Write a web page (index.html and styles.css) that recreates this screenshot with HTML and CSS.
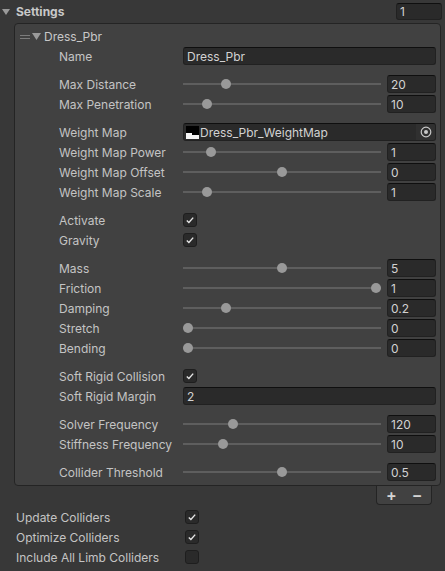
FILE: index.html
```html
<!DOCTYPE html>
<html>
<head>
<meta charset="utf-8">
<link rel="stylesheet" href="styles.css">
</head>
<body>
<div class="inspector">
  <div class="header">
    <svg class="arrow" width="8" height="8" viewBox="0 0 8 8"><polygon points="0,1 8,1 4,7" fill="#9a9a9a"/></svg>
    <span class="header-title">Settings</span>
    <div class="field size-field">1</div>
  </div>

  <div class="list">
    <div class="panel">
      <div class="group">
        <div class="element-head">
          <svg class="handle" width="10" height="6" viewBox="0 0 10 6"><rect x="0" y="1" width="10" height="1" fill="#7c7c7c"/><rect x="0" y="4" width="10" height="1" fill="#7c7c7c"/></svg>
          <svg class="arrow" width="9" height="8" viewBox="0 0 9 8"><polygon points="0,1 9,1 4.5,8" fill="#9a9a9a"/></svg>
          <span class="element-title">Dress_Pbr</span>
        </div>
        <div class="row"><span class="label">Name</span><div class="field">Dress_Pbr</div></div>
      </div>

      <div class="group">
        <div class="row"><span class="label">Max Distance</span><div class="slider"><div class="track"><span class="thumb" style="--v:0.202"></span></div><div class="field value">20</div></div></div>
        <div class="row"><span class="label">Max Penetration</span><div class="slider"><div class="track"><span class="thumb" style="--v:0.1"></span></div><div class="field value">10</div></div></div>
      </div>

      <div class="group">
        <div class="row"><span class="label">Weight Map</span>
          <div class="field objfield">
            <svg class="tex" width="13" height="13" viewBox="0 0 13 13"><rect width="13" height="13" fill="#000"/><rect x="0" y="7" width="6" height="2" fill="#f4f4f4"/><rect x="0" y="9" width="13" height="4" fill="#f4f4f4"/></svg>
            <span class="objname">Dress_Pbr_WeightMap</span>
            <span class="picker"><svg width="12" height="12" viewBox="0 0 12 12"><circle cx="6" cy="6" r="4.8" fill="none" stroke="#c8c8c8" stroke-width="1.2"/><circle cx="6" cy="6" r="2" fill="#c8c8c8"/></svg></span>
          </div>
        </div>
        <div class="row"><span class="label">Weight Map Power</span><div class="slider"><div class="track"><span class="thumb" style="--v:0.122"></span></div><div class="field value">1</div></div></div>
        <div class="row"><span class="label">Weight Map Offset</span><div class="slider"><div class="track"><span class="thumb" style="--v:0.5"></span></div><div class="field value">0</div></div></div>
        <div class="row"><span class="label">Weight Map Scale</span><div class="slider"><div class="track"><span class="thumb" style="--v:0.1"></span></div><div class="field value">1</div></div></div>
      </div>

      <div class="group">
        <div class="row"><span class="label">Activate</span><span class="check on"><svg width="14" height="14" viewBox="0 0 14 14"><polyline points="3.8,7.4 5.9,9.4 10.2,4.6" fill="none" stroke="#e6e6e6" stroke-width="1.4"/></svg></span></div>
        <div class="row"><span class="label">Gravity</span><span class="check on"><svg width="14" height="14" viewBox="0 0 14 14"><polyline points="3.8,7.4 5.9,9.4 10.2,4.6" fill="none" stroke="#e6e6e6" stroke-width="1.4"/></svg></span></div>
      </div>

      <div class="group">
        <div class="row"><span class="label">Mass</span><div class="slider"><div class="track"><span class="thumb" style="--v:0.5"></span></div><div class="field value">5</div></div></div>
        <div class="row"><span class="label">Friction</span><div class="slider"><div class="track"><span class="thumb" style="--v:1"></span></div><div class="field value">1</div></div></div>
        <div class="row"><span class="label">Damping</span><div class="slider"><div class="track"><span class="thumb" style="--v:0.2"></span></div><div class="field value">0.2</div></div></div>
        <div class="row"><span class="label">Stretch</span><div class="slider"><div class="track"><span class="thumb" style="--v:0"></span></div><div class="field value">0</div></div></div>
        <div class="row"><span class="label">Bending</span><div class="slider"><div class="track"><span class="thumb" style="--v:0"></span></div><div class="field value">0</div></div></div>
      </div>

      <div class="group">
        <div class="row"><span class="label">Soft Rigid Collision</span><span class="check on"><svg width="14" height="14" viewBox="0 0 14 14"><polyline points="3.8,7.4 5.9,9.4 10.2,4.6" fill="none" stroke="#e6e6e6" stroke-width="1.4"/></svg></span></div>
        <div class="row"><span class="label">Soft Rigid Margin</span><div class="field">2</div></div>
      </div>

      <div class="group">
        <div class="row"><span class="label">Solver Frequency</span><div class="slider"><div class="track"><span class="thumb" style="--v:0.24"></span></div><div class="field value">120</div></div></div>
        <div class="row"><span class="label">Stiffness Frequency</span><div class="slider"><div class="track"><span class="thumb" style="--v:0.186"></span></div><div class="field value">10</div></div></div>
      </div>

      <div class="group">
        <div class="row"><span class="label">Collider Threshold</span><div class="slider"><div class="track"><span class="thumb" style="--v:0.5"></span></div><div class="field value">0.5</div></div></div>
      </div>
    </div>
    <div class="footer"><span class="btn plus">+</span><span class="btn minus">&minus;</span></div>
  </div>

  <div class="bottom">
    <div class="brow"><span class="label">Update Colliders</span><span class="check on"><svg width="14" height="14" viewBox="0 0 14 14"><polyline points="3.8,7.4 5.9,9.4 10.2,4.6" fill="none" stroke="#e6e6e6" stroke-width="1.4"/></svg></span></div>
    <div class="brow"><span class="label">Optimize Colliders</span><span class="check on"><svg width="14" height="14" viewBox="0 0 14 14"><polyline points="3.8,7.4 5.9,9.4 10.2,4.6" fill="none" stroke="#e6e6e6" stroke-width="1.4"/></svg></span></div>
    <div class="brow"><span class="label">Include All Limb Colliders</span><span class="check"></span></div>
  </div>
</div>
</body>
</html>
```

FILE: styles.css
```css
html, body {
  margin: 0;
  padding: 0;
}
body {
  background: #383838;
  font-family: Inter, "Noto Sans", "Liberation Sans", sans-serif;
  font-size: 12px;
  color: #c4c4c4;
  width: 445px;
  height: 571px;
  overflow: hidden;
}
.inspector {
  display: flex;
  flex-direction: column;
}
.header {
  height: 23px;
  display: flex;
  align-items: center;
  padding-left: 2px;
}
.header .arrow {
  margin-top: 1px;
}
.header-title {
  font-weight: 700;
  margin-left: 6px;
  color: #c8c8c8;
}
.field {
  box-sizing: border-box;
  height: 18px;
  background: #2a2a2a;
  border: 1px solid #212121;
  border-top-color: #0f0f0f;
  border-radius: 3px;
  padding: 0 3px;
  display: flex;
  align-items: center;
  color: #d2d2d2;
  white-space: nowrap;
  overflow: hidden;
}
.size-field {
  margin-left: auto;
  margin-right: 3px;
  width: 46px;
  height: 17px;
  margin-top: -1px;
}
.list {
  margin-left: 14px;
  width: 427px;
  display: flex;
  flex-direction: column;
}
.panel {
  background: #414141;
  border: 1px solid #242424;
  border-radius: 4px;
  padding: 3px 4px 4px 0;
  display: flex;
  flex-direction: column;
  gap: 10px;
}
.group {
  display: flex;
  flex-direction: column;
  gap: 2px;
}
.element-head {
  height: 18px;
  display: flex;
  align-items: center;
  padding-left: 5px;
}
.handle {
  margin-right: 2px;
  margin-top: 1px;
}
.element-title {
  margin-left: 3px;
  color: #c8c8c8;
}
.row {
  height: 18px;
  display: grid;
  grid-template-columns: 124px 253px;
  align-items: center;
  padding-left: 44px;
}
.label {
  white-space: nowrap;
}
.slider {
  display: flex;
  align-items: center;
  gap: 6px;
}
.track {
  flex: 1;
  height: 2px;
  background: #5e5e5e;
  position: relative;
}
.thumb {
  position: absolute;
  top: -4px;
  width: 10px;
  height: 10px;
  border-radius: 50%;
  background: #999999;
  left: calc(var(--v) * (100% - 10px));
}
.value {
  width: 49px;
  flex: none;
}
.objfield {
  padding: 0 0 0 2px;
}
.tex {
  flex: none;
  margin-right: 1px;
}
.objname {
  flex: 1;
}
.picker {
  width: 19px;
  align-self: stretch;
  background: #303030;
  display: flex;
  align-items: center;
  justify-content: center;
}
.check {
  box-sizing: border-box;
  width: 14px;
  height: 14px;
  background: #2a2a2a;
  border: 1px solid #1e1e1e;
  border-radius: 3px;
  display: flex;
  align-items: center;
  justify-content: center;
}
.check svg {
  margin: -1px;
}
.footer {
  align-self: flex-end;
  margin-right: 9px;
  width: 56px;
  height: 19px;
  box-sizing: border-box;
  background: #414141;
  border: 1px solid #242424;
  border-top: none;
  border-radius: 0 0 4px 4px;
  display: flex;
  align-items: center;
  padding: 0 0 1px 9px;
  gap: 15px;
  color: #d4d4d4;
  font-size: 16px;
  font-weight: 600;
}
.bottom {
  margin-top: 3px;
  display: flex;
  flex-direction: column;
  gap: 2px;
}
.brow {
  height: 18px;
  display: grid;
  grid-template-columns: 169px 14px;
  align-items: center;
  padding-left: 16px;
}
```
